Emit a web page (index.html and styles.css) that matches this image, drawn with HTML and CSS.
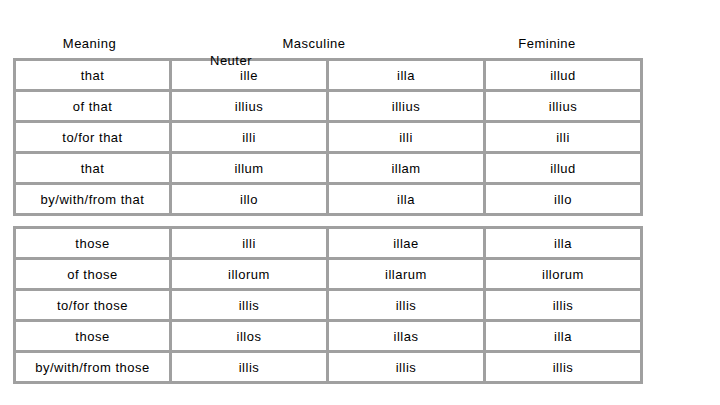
FILE: index.html
```html
<!DOCTYPE html>
<html>
<head>
<meta charset="utf-8">
<link rel="stylesheet" href="styles.css">
</head>
<body>
<div class="page">
  <div class="heads">
    <div class="h h-meaning">Meaning</div>
    <div class="h h-masc">Masculine</div>
    <div class="h h-fem">Feminine</div>
  </div>
  <div class="neuter"><span>Neuter</span></div>
  <div class="table">
    <div class="c">that</div><div class="c">ille</div><div class="c">illa</div><div class="c">illud</div>
    <div class="c">of that</div><div class="c">illius</div><div class="c">illius</div><div class="c">illius</div>
    <div class="c">to/for that</div><div class="c">illi</div><div class="c">illi</div><div class="c">illi</div>
    <div class="c">that</div><div class="c">illum</div><div class="c">illam</div><div class="c">illud</div>
    <div class="c">by/with/from that</div><div class="c">illo</div><div class="c">illa</div><div class="c">illo</div>
  </div>
  <div class="table second">
    <div class="c">those</div><div class="c">illi</div><div class="c">illae</div><div class="c">illa</div>
    <div class="c">of those</div><div class="c">illorum</div><div class="c">illarum</div><div class="c">illorum</div>
    <div class="c">to/for those</div><div class="c">illis</div><div class="c">illis</div><div class="c">illis</div>
    <div class="c">those</div><div class="c">illos</div><div class="c">illas</div><div class="c">illa</div>
    <div class="c">by/with/from those</div><div class="c">illis</div><div class="c">illis</div><div class="c">illis</div>
  </div>
</div>
</body>
</html>
```
FILE: styles.css
```css
html, body {
  margin: 0;
  padding: 0;
  background: #ffffff;
}
body {
  font-family: "Liberation Sans", Arial, sans-serif;
  font-size: 13px;
  letter-spacing: 0.5px;
  color: #000000;
}
.page {
  padding: 36px 0 0 13px;
}
.heads {
  display: grid;
  grid-template-columns: 153px 296px 170px;
  height: 16px;
  line-height: 16px;
}
.h {
  text-align: center;
  white-space: nowrap;
}
.neuter {
  position: relative;
  z-index: 1;
  height: 6px;
  line-height: 18px;
  padding-left: 197px;
  white-space: nowrap;
}
.table {
  display: grid;
  grid-template-columns: 156px 157px 157px 157px;
  grid-auto-rows: 31px;
  width: 627px;
  border-left: 3px solid #a0a0a0;
  border-top: 3px solid #a0a0a0;
}
.second {
  margin-top: 10px;
}
.c {
  box-sizing: border-box;
  border-right: 3px solid #a0a0a0;
  border-bottom: 3px solid #a0a0a0;
  display: flex;
  align-items: center;
  justify-content: center;
  white-space: nowrap;
}
```
